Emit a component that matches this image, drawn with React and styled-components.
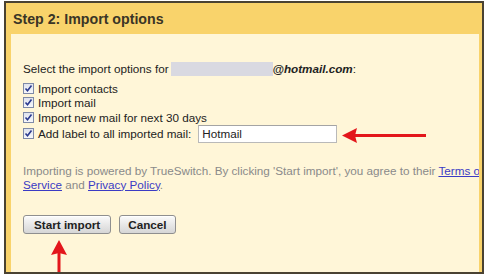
import styled, { createGlobalStyle } from "styled-components";

const GlobalStyle = createGlobalStyle`
  html, body {
    margin: 0;
    padding: 0;
    background: #ffffff;
  }
  body {
    font-family: "Liberation Sans", Arial, sans-serif;
  }
`;

const Page = styled.div`
  position: relative;
  width: 490px;
  height: 276px;
  overflow: hidden;
`;

const Frame = styled.div`
  box-sizing: border-box;
  width: 480px;
  height: 273px;
  margin: 1px 0 0 4px;
  border: 2px solid #4a4232;
  background: #f9d36b;
  display: flex;
  flex-direction: column;
  overflow: hidden;
`;

const Header = styled.h2`
  margin: 0;
  height: 31px;
  flex-shrink: 0;
  display: flex;
  align-items: center;
  padding-left: 7px;
  font-size: 14.2px;
  font-weight: bold;
  color: #3a3526;
`;

const Body = styled.div`
  flex: 1;
  margin: 0 3px 0 5px;
  padding: 28px 0 0 12px;
  background: #fff6d8;
  overflow: hidden;
  font-size: 11.7px;
  color: #222222;
`;

const Intro = styled.div`
  height: 14px;
  line-height: 14px;
  display: flex;
  align-items: center;
  white-space: nowrap;
`;

const Redacted = styled.span`
  display: inline-block;
  width: 102px;
  height: 14px;
  margin-left: 2px;
  background: #d9d9e1;
`;

const Email = styled.b`
  font-style: italic;
`;

const Options = styled.div`
  margin-top: 5px;
  display: flex;
  flex-direction: column;
`;

const Row = styled.label`
  height: ${(p) => (p.$tall ? "18px" : "14.5px")};
  display: flex;
  align-items: center;
  gap: 4px;
  white-space: nowrap;
`;

const Box = styled.span`
  box-sizing: border-box;
  width: 11px;
  height: 11px;
  border: 1px solid #7f8aa8;
  background: linear-gradient(#dfe3ee, #f6f7fb);
  display: flex;
  align-items: center;
  justify-content: center;
`;

const LabelInput = styled.input`
  box-sizing: border-box;
  width: 139px;
  height: 18px;
  margin: 0 0 0 3px;
  padding: 0 3px;
  border: 1px solid #b9b9b9;
  border-top-color: #a4a4a4;
  background: #ffffff;
  font-family: inherit;
  font-size: 11.7px;
  color: #222222;
  outline: none;
`;

const Notice = styled.p`
  margin: 21px 0 0;
  line-height: 14px;
  color: #8a8a8a;
  white-space: nowrap;
`;

const Link = styled.a`
  color: #3b3bc4;
  text-decoration: underline;
`;

const Buttons = styled.div`
  margin-top: 23.5px;
  display: flex;
  gap: 8px;
`;

const Button = styled.button`
  box-sizing: border-box;
  height: 19px;
  padding: 0 ${(p) => p.$pad || "9px"};
  border: 1px solid #8f8f8f;
  border-radius: 3px;
  background: linear-gradient(#fbfbfb, #e6e6e6 55%, #d6d6d6);
  box-shadow: inset 0 1px 0 #ffffff;
  font-family: inherit;
  font-size: 11.7px;
  font-weight: bold;
  color: #222222;
  cursor: pointer;
`;

const Arrow = styled.svg`
  position: absolute;
  left: ${(p) => p.$x}px;
  top: ${(p) => p.$y}px;
  fill: #e3161b;
`;

const Check = () => (
  <Box>
    <svg width="9" height="9" viewBox="0 0 9 9">
      <path d="M1.5 4.5 L3.5 6.8 L7.5 1.5" fill="none" stroke="#2b3a8f" strokeWidth="1.6" />
    </svg>
  </Box>
);

export default function App() {
  return (
    <Page>
      <GlobalStyle />
      <Frame>
        <Header>Step 2: Import options</Header>
        <Body>
          <Intro>
            Select the import options for
            <Redacted />
            <Email>@hotmail.com</Email>:
          </Intro>
          <Options>
            <Row>
              <Check />
              Import contacts
            </Row>
            <Row>
              <Check />
              Import mail
            </Row>
            <Row>
              <Check />
              Import new mail for next 30 days
            </Row>
            <Row $tall>
              <Check />
              Add label to all imported mail:
              <LabelInput defaultValue="Hotmail" />
            </Row>
          </Options>
          <Notice>
            Importing is powered by TrueSwitch. By clicking 'Start import', you agree to their{" "}
            <Link href="#">Terms of</Link>
            <br />
            <Link href="#">Service</Link> and <Link href="#">Privacy Policy</Link>.
          </Notice>
          <Buttons>
            <Button $pad="10px">Start import</Button>
            <Button $pad="8px">Cancel</Button>
          </Buttons>
        </Body>
      </Frame>
      <Arrow $x={340} $y={126} width="90" height="20" viewBox="0 0 90 20">
        <polygon points="2,9.5 17,2 15,9.5 17,17" />
        <rect x="14" y="8" width="72" height="3" />
      </Arrow>
      <Arrow $x={50} $y={239} width="18" height="34" viewBox="0 0 18 34">
        <polygon points="9,1 17,16 9,14 1,16" />
        <rect x="7.5" y="13" width="3" height="20" />
      </Arrow>
    </Page>
  );
}
